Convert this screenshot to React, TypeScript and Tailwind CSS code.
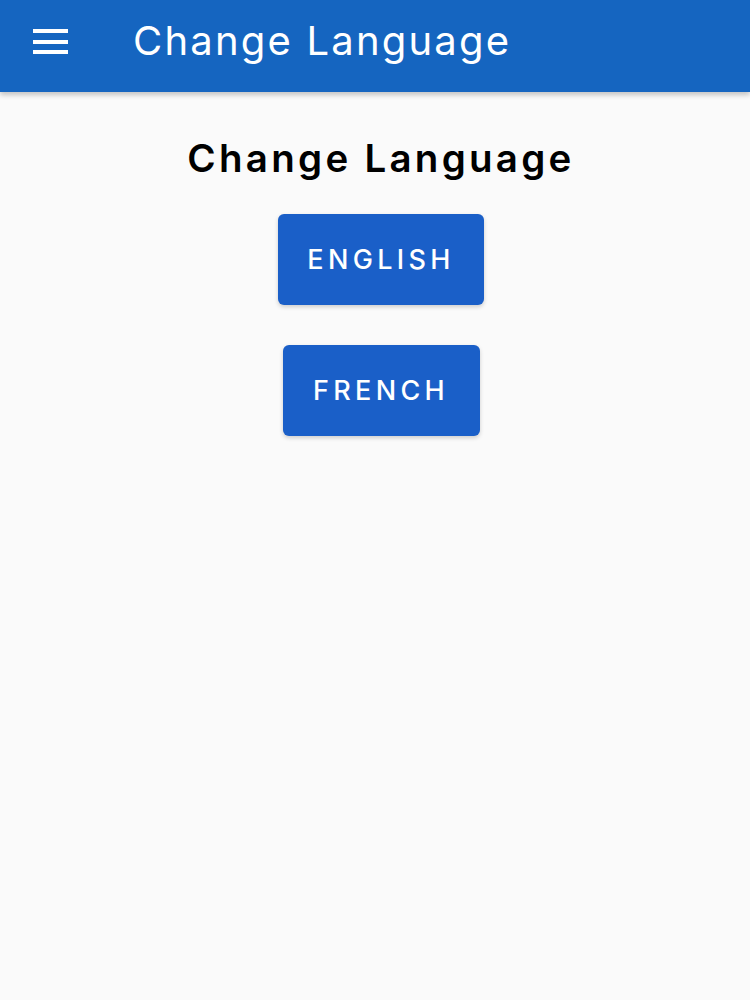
const font = { fontFamily: "Inter, 'DejaVu Sans', sans-serif" };

const MenuIcon = () => (
  <svg width="35" height="25" viewBox="0 0 35 25" fill="white" aria-hidden="true">
    <rect x="0" y="0" width="35" height="4" />
    <rect x="0" y="11" width="35" height="4" />
    <rect x="0" y="21" width="35" height="4" />
  </svg>
);

const LangButton = ({ label, width }: { label: string; width: string }) => (
  <button
    className={`${width} h-[91px] rounded-md bg-[#1a5fc8] text-white text-[27px] font-medium tracking-[0.16em] pt-[3px] shadow-[0_2px_4px_rgba(0,0,0,0.18)]`}
  >
    {label}
  </button>
);

export default function App() {
  return (
    <div className="min-h-[1000px] bg-[#fafafa]" style={font}>
      {/* App bar */}
      <header className="h-[92px] bg-[#1565c0] flex items-center pb-[10px] shadow-[0_3px_5px_rgba(0,0,0,0.22)]">
        <div className="w-[133px] pl-[33px] flex items-center">
          <MenuIcon />
        </div>
        <h1 className="text-white text-[40px] font-normal tracking-[0.055em] leading-none">
          Change Language
        </h1>
      </header>

      {/* Content */}
      <main className="flex flex-col items-center pt-[47px] pl-[12px]">
        <h2 className="text-black text-[38.5px] font-semibold leading-none tracking-[0.085em]">
          Change Language
        </h2>
        <div className="mt-[36px] flex flex-col items-center gap-[40px]">
          <LangButton label="ENGLISH" width="w-[206px]" />
          <LangButton label="FRENCH" width="w-[197px]" />
        </div>
      </main>
    </div>
  );
}
